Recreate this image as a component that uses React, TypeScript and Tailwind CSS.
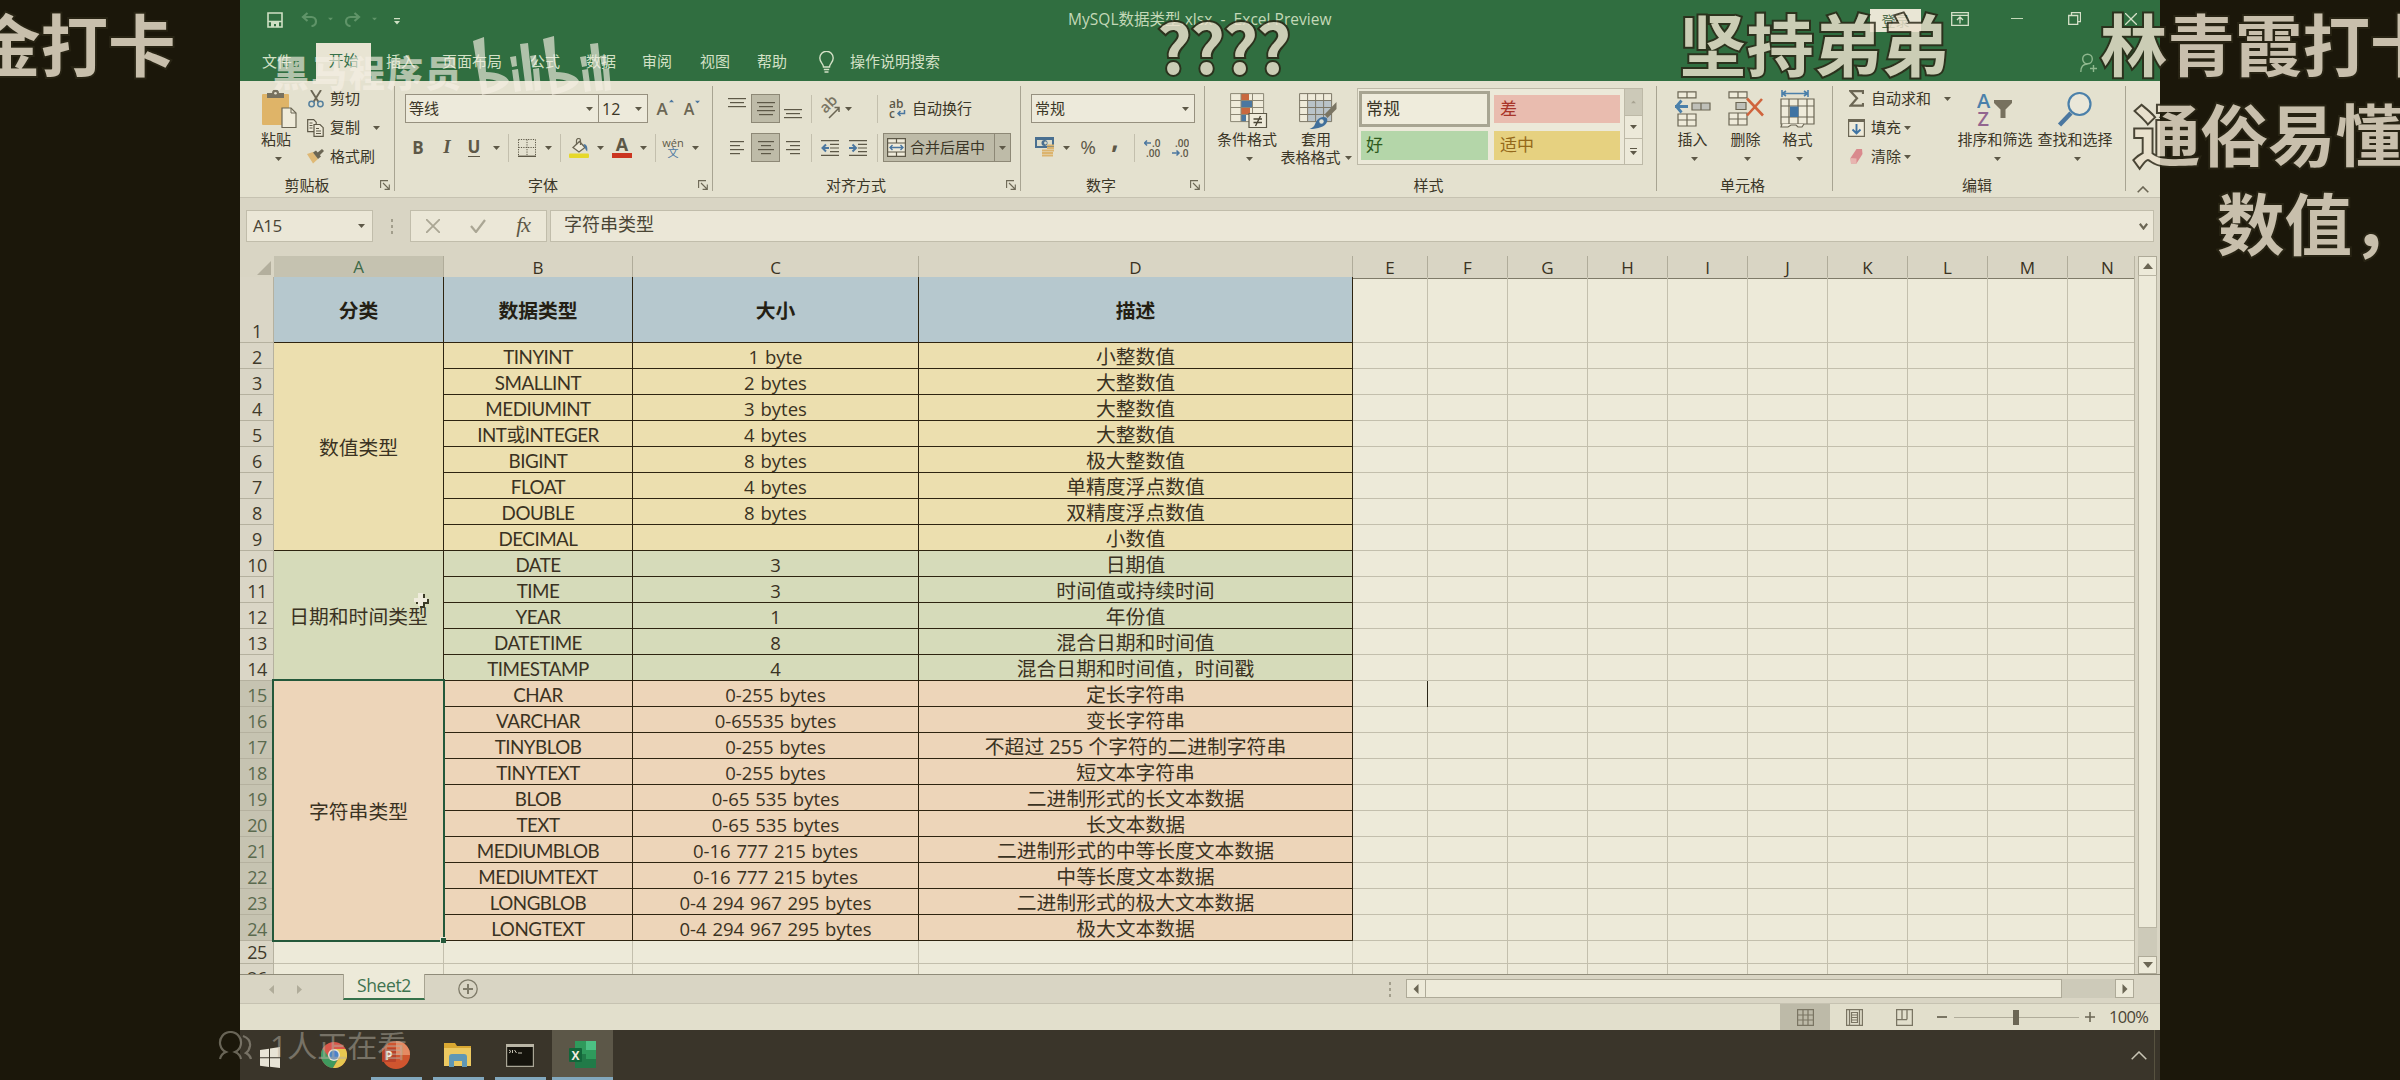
import React from "react";

type Kids = { children?: React.ReactNode; className?: string };

const cx = (...parts: (string | undefined)[]) => parts.filter(Boolean).join(" ");

/* ---------- small building blocks ---------- */

const Caret = ({ className }: { className?: string }) => (
  <svg viewBox="0 0 7 4" className={cx("h-1 w-[7px] shrink-0", className ?? "text-[#5d5847]")}>
    <path d="M0 0h7L3.5 4z" fill="currentColor" />
  </svg>
);

const Slot = ({ children, className }: Kids) => (
  <div className={cx("flex shrink-0 items-center justify-center", className)}>{children}</div>
);

const Sep = ({ className }: { className: string }) => (
  <Slot className={className}>
    <div className="h-7 w-px bg-[#c3bfad]" />
  </Slot>
);

const Launcher = () => (
  <svg viewBox="0 0 10 10" className="h-[10px] w-[10px]" fill="none" stroke="#6c6755" strokeWidth="1.1">
    <path d="M.6 8V.6H8M3 3l6 6M9.3 4.6v4.8H4.6" />
  </svg>
);

const Group = ({
  className,
  label,
  labelClass,
  launcher,
  children,
}: Kids & { label: string; labelClass: string; launcher?: boolean }) => (
  <div className={cx("relative flex h-[116px] shrink-0 flex-col", className)}>
    <div className="h-[91px] w-full">{children}</div>
    <div className="flex h-[25px] items-center justify-between pr-[5px]">
      <span className={cx("text-center text-[15px] leading-5", labelClass)}>{label}</span>
      {launcher && <Launcher />}
    </div>
    <div className="absolute right-0 top-[5px] h-[105px] w-px bg-[#a8a492]" />
  </div>
);

const Lines = ({ widths, align }: { widths: number[]; align: "start" | "middle" | "end" }) => (
  <svg viewBox={`0 0 18 ${widths.length * 4 - 2}`} className="w-[18px]" height={widths.length * 4 - 2}>
    {widths.map((w, i) => (
      <rect
        key={i}
        x={align === "start" ? 0 : align === "end" ? 18 - w : (18 - w) / 2}
        y={i * 4}
        width={w}
        height="1.2"
        fill="#5d5847"
      />
    ))}
  </svg>
);

/* ---------- icons ---------- */

const SaveIcon = () => (
  <svg viewBox="0 0 16 16" className="h-4 w-4" fill="none" stroke="#cfe0c4" strokeWidth="1.6">
    <path d="M1 1h14v14H1zM1 9.5h14" />
    <path d="M4 10h8v5H9v-3H7v3H4z" fill="#cfe0c4" stroke="none" />
  </svg>
);

const UndoIcon = ({ flip }: { flip?: boolean }) => (
  <svg viewBox="0 0 18 15" className={cx("h-[15px] w-[18px]", flip ? "-scale-x-100" : "")} fill="none" stroke="#5f9468" strokeWidth="2.2">
    <path d="M6.5 1L2 5l4.5 4M2 5h8.5a4.5 4.5 0 0 1 0 9" />
  </svg>
);

const PasteIcon = () => (
  <svg viewBox="0 0 35 38" className="h-[38px] w-[35px]">
    <rect x="0" y="4" width="27" height="31" rx="1" fill="#dfb468" />
    <path d="M5 3h5a3.500 3.500 0 0 1 7 0h5v5H5z" fill="#77715f" />
    <circle cx="13.500" cy="3.200" r="1.300" fill="#e5e1d0" />
    <path d="M20 18h9l5 5v14.500H20z" fill="#efebda" stroke="#6b6654" strokeWidth="1.200" />
    <path d="M29 18v5h5" fill="none" stroke="#6b6654" strokeWidth="1" />
  </svg>
);

const CutIcon = () => (
  <svg viewBox="0 0 16 18" className="h-[18px] w-4" fill="none">
    <path d="M3 0l7.500 12M13 0L5.500 12" stroke="#6b6654" strokeWidth="1.900" />
    <circle cx="3.600" cy="14" r="2.700" stroke="#56809d" strokeWidth="1.500" />
    <circle cx="12.400" cy="14" r="2.700" stroke="#56809d" strokeWidth="1.500" />
  </svg>
);

const CopyIcon = () => (
  <svg viewBox="0 0 17 18" className="h-[18px] w-[17px]" fill="#ece8d7" stroke="#5d5847" strokeWidth="1.200">
    <path d="M.7.7h6l2.500 2.500v9.500H.7z" />
    <path d="M7 5.500h6l3.200 3.200v8.600H7z" />
    <path d="M2.500 4h3M2.500 6.500h3M2.500 9h3M9 9.500h3M9 12h5M9 14.500h5" fill="none" />
  </svg>
);

const BrushIcon = () => (
  <svg viewBox="0 0 17 15" className="h-[15px] w-[17px]">
    <path d="M0 5l6-2 5 7-5 4.500z" fill="#dfb976" />
    <path d="M6 3.500l3-2 5 6-3 2.500z" fill="#6b6654" />
    <path d="M10 4l5-4 2 2-4.500 4.500z" fill="#6b6654" />
  </svg>
);

const BorderIcon = () => (
  <svg viewBox="0 0 18 18" className="h-[18px] w-[18px]" fill="none" stroke="#5d5847">
    <path d="M.5.5h17M.5 8.500h17M.5.5v16M9 .5v16M17.500.5v16" strokeDasharray="1.200 1.200" />
    <path d="M0 17.300h18" strokeWidth="1.400" />
  </svg>
);

const BucketIcon = () => (
  <svg viewBox="0 0 20 20" className="h-5 w-5" fill="none">
    <path d="M4 9.500l6.500-6L16 9.500 10 14z" fill="#efebda" stroke="#6b6654" strokeWidth="1.300" />
    <path d="M7.500 7V2.500a2 2 0 0 1 4 0V7" stroke="#6b6654" strokeWidth="1.200" />
    <path d="M14.500 6c3 0 4.500 3 3.700 7.500-1.400-1-2-3-2.500-4.500z" fill="#4b77a0" />
    <rect x="0" y="15.500" width="20" height="4.500" rx="1" fill="#e6d82a" />
  </svg>
);

const OrientIcon = () => (
  <svg viewBox="0 0 20 18" className="h-[18px] w-5 overflow-visible">
    <text x="0" y="0" transform="translate(5.500 14) rotate(-45)" fontSize="15" fontFamily="Open Sans" fontWeight="600" fill="#7a7563">
      ab
    </text>
    <path d="M9 18l10-10M14.500 7.500h4.500V12" stroke="#6b6654" strokeWidth="1.500" fill="none" />
  </svg>
);

const IndentIcon = ({ into }: { into?: boolean }) => (
  <svg viewBox="0 0 18 16" className="h-4 w-[18px]">
    <path d="M0 .7h18M9 4.400h9M9 8h9M9 11.600h9M0 15.300h18" stroke="#5d5847" strokeWidth="1.200" />
    <path d={into ? "M0 8h6M3.500 4.500L7 8l-3.500 3.500" : "M1.500 8H8M5 4.500L1.500 8 5 11.500"} stroke="#4b77a0" strokeWidth="2" fill="none" />
  </svg>
);

const WrapIcon = () => (
  <svg viewBox="0 0 17 20" className="h-5 w-[17px]">
    <text x="0" y="8.500" fontSize="12" fontFamily="Open Sans" fontWeight="600" fill="#5d5847">ab</text>
    <text x="0" y="18.500" fontSize="12" fontFamily="Open Sans" fontWeight="600" fill="#5d5847">c</text>
    <path d="M15.500 11v3.500H9M11.500 12L9 14.500l2.500 2.500" fill="none" stroke="#4b77a0" strokeWidth="1.500" />
  </svg>
);

const MergeIcon = () => (
  <svg viewBox="0 0 19 19" className="h-[19px] w-[19px]" fill="#efebda" stroke="#5d5847" strokeWidth="1.200">
    <path d="M.6.6h17.800v17.800H.6zM.6 5h17.800M.6 14h17.800M9.500.6V5M9.500 14v4.400" />
    <path d="M3 9.500h13M5.500 7L3 9.500 5.500 12M13.500 7L16 9.500 13.500 12" fill="none" stroke="#4b77a0" strokeWidth="1.400" />
  </svg>
);

const CurrencyIcon = () => (
  <svg viewBox="0 0 20 21" className="h-[21px] w-5">
    <path d="M0 0h19v11H0z" fill="#496f90" />
    <path d="M2 3h15v6H2z" fill="#dcdccb" />
    <circle cx="9.500" cy="6" r="3" fill="#496f90" />
    <circle cx="10.500" cy="6" r="1.400" fill="#dcdccb" />
    <path d="M12 8.500h7M12 11h7M12 13.500h7M7 13.500h5M7 16h11M7 18.500h11" stroke="#dcb46e" strokeWidth="1.800" />
  </svg>
);

const DecimalIcon = ({ dec }: { dec?: boolean }) => (
  <svg viewBox="0 0 17 20" className="h-5 w-[17px]">
    <g fontSize="10" fontFamily="Open Sans" fontWeight="600" fill="#5d5847">
      <text x={dec ? 3 : 8} y="8.500">{dec ? ".00" : ".0"}</text>
      <text x={dec ? 8 : 2} y="18.500">{dec ? ".0" : ".00"}</text>
    </g>
    <path
      d={dec ? "M0 15h7M4.500 12.500L7 15l-2.500 2.500" : "M7 5H0.500M3 2.500L.5 5 3 7.500"}
      stroke="#4b77a0"
      strokeWidth="1.500"
      fill="none"
    />
  </svg>
);

const CondIcon = () => (
  <svg viewBox="0 0 38 36" className="h-9 w-[38px]">
    <path d="M.6.6h33v28H.6z" fill="#efebda" />
    <path d="M11 0h8v8h-8z" fill="#c9683f" />
    <path d="M11 8h11v7H11z" fill="#4b77a0" />
    <path d="M11 15h9v7h-9z" fill="#c9683f" />
    <path d="M11 22h5v7h-5z" fill="#4b77a0" />
    <path d="M.6.6h33v28H.6zM.6 7.500h33M.6 14.500h33M.6 21.500h33M11 .6v28M22.500.6v28" stroke="#8c8775" fill="none" />
    <path d="M19 20.500h17.500v14H19z" fill="#efebda" stroke="#5d5847" strokeWidth="1.200" />
    <path d="M23.500 26h8.500M23.500 29.500h8.500M30.500 23l-5 10" stroke="#4a4535" strokeWidth="1.400" />
  </svg>
);

const TableFmtIcon = () => (
  <svg viewBox="0 0 38 36" className="h-9 w-[38px]">
    <path d="M.6.6h32v28H.6z" fill="#efebda" />
    <path d="M9 7.500h24v21H9z" fill="#b9c3c8" />
    <path d="M.6.6h32v28H.6zM.6 7.500h32M.6 14.500h32M.6 21.500h32M8.600.6v28M16.600.6v28M24.600.6v28" stroke="#7d7867" fill="none" />
    <path d="M37.500 9v7l-9 9-3-3.500z" fill="#7a7563" />
    <path d="M24 24c4-.5 5.500 2.500 3.500 6s-8 6-17 6c5-2 5-4 6.500-7s4-4.700 7-5z" fill="#41709b" />
    <circle cx="22.500" cy="28.500" r="2.200" fill="#dfe1d6" />
  </svg>
);

const InsertIcon = () => (
  <svg viewBox="0 0 36 36" className="h-9 w-9" fill="#efebda" stroke="#6b6654" strokeWidth="1.200">
    <path d="M3 .8h18v6H3zM12 .8v6M3 23h18v12H3zM12 23v12M3 29h18" />
    <path d="M17 12h18v7H17zM26 12v7" fill="#bfc0b9" />
    <path d="M0 15.500h13M6.500 9.500L1.500 15.500l5 6" fill="none" stroke="#4b80aa" strokeWidth="2.800" />
  </svg>
);

const DeleteIcon = () => (
  <svg viewBox="0 0 36 36" className="h-9 w-9" fill="#efebda" stroke="#6b6654" strokeWidth="1.200">
    <path d="M1 .8h18v6H1zM10 .8v6M1 22h18v12H1zM10 22v12M1 28h18" />
    <path d="M8 11.500h10v7H8z" fill="#bfc0b9" />
    <path d="M19 7.500l16 17M34 8L19 24.500" fill="none" stroke="#d0643d" strokeWidth="2.600" />
  </svg>
);

const FormatIcon = () => (
  <svg viewBox="0 0 36 38" className="h-[38px] w-9" fill="#efebda" stroke="#6b6654" strokeWidth="1.200">
    <path d="M1 9h33v25H1zM1 16h33M1 27h33M9 9v25M18 9v25M27 9v25" />
    <path d="M10 16.500h8.500V27H10z" fill="#3f73a3" stroke="none" />
    <path d="M2 34l-1 3h7l3-2h5l2 2h4l2-3" />
    <path d="M2 3.500h26M2 0v7M28 0v7M6 1L2.500 3.500 6 6M24 1l3.500 2.500L24 6" fill="none" stroke="#4b80aa" strokeWidth="1.600" />
  </svg>
);

const SigmaIcon = () => (
  <svg viewBox="0 0 15 17" className="h-[17px] w-[15px]" fill="none" stroke="#6b6654" strokeWidth="2.200">
    <path d="M14 4V1.200H1.500L8 8.200l-6.500 7.500H14V13" />
  </svg>
);

const FillIcon = () => (
  <svg viewBox="0 0 17 18" className="h-[18px] w-[17px]">
    <path d="M.6.6h15.800v16.800H.6z" fill="#efebda" stroke="#6b6654" strokeWidth="1.200" />
    <path d="M0 0h17v3H0z" fill="#6b6654" />
    <path d="M8.500 5v9.500M4.500 10.500l4 4 4-4" stroke="#3f73a3" strokeWidth="1.900" fill="none" />
  </svg>
);

const EraserIcon = () => (
  <svg viewBox="0 0 13 15" className="h-[15px] w-[13px]">
    <path d="M6.500 0h5.500l.5 5L6.500 14.500H1L.5 9z" fill="#d98a8d" />
    <path d="M.5 9l6 .5v5H1z" fill="#e7b5b0" />
  </svg>
);

const SortIcon = () => (
  <svg viewBox="0 0 36 34" className="h-[34px] w-9">
    <g fontFamily="Open Sans" fontSize="20" fontWeight="600">
      <text x="0" y="14.500" fill="#4b80aa">A</text>
      <text x="0.500" y="33" fill="#92658f">Z</text>
    </g>
    <path d="M17 7h18v3l-6.500 6.500V25h-5v-8.500L17 10z" fill="#77715f" />
  </svg>
);

const FindIcon = () => (
  <svg viewBox="0 0 36 36" className="h-9 w-9">
    <circle cx="22.500" cy="13" r="11" fill="#eae7d9" stroke="#4b80aa" strokeWidth="2.200" />
    <path d="M14 22L2.500 34" stroke="#4b77a0" strokeWidth="4.500" />
  </svg>
);

/* ---------- title bar and tabs ---------- */

const TitleBar = () => (
  <div className="flex h-[43px] items-center pl-[17px] pb-[6px] text-[#c4d9b8]">
    <Slot className="w-9 pt-[2px]"><SaveIcon /></Slot>
    <Slot className="w-[33px] pt-[2px]"><UndoIcon /></Slot>
    <Slot className="w-2"><Caret className="scale-75 text-[#5f9468]" /></Slot>
    <Slot className="w-9 pt-[2px]"><UndoIcon flip /></Slot>
    <Slot className="w-2"><Caret className="scale-75 text-[#5f9468]" /></Slot>
    <Slot className="w-[38px]">
      <svg viewBox="0 0 6 7" className="mt-[6px] h-[7px] w-[6px]"><path d="M0 0h6v1.200H0zM0 3h6L3 6.500z" fill="#cfe0c4" /></svg>
    </Slot>
    <div className="ml-[652px] w-[802px] whitespace-pre text-[15.500px] leading-6 tracking-[0.030px]">MySQL数据类型.xlsx  -  Excel Preview</div>
    <Slot className="mt-1 h-[23px] w-[51px] bg-[#e9e6d5] text-sm text-[#4b6b48]">登录</Slot>
    <Slot className="w-[77px]">
      <svg viewBox="0 0 18 14" className="h-[14px] w-[18px]" fill="none" stroke="#d5e0c8" strokeWidth="1.300">
        <path d="M.7.7h16.600v12.600H.7zM.7 3.300h16.600M9 11.500V5.500M6 8l3-3 3 3" />
      </svg>
    </Slot>
    <Slot className="w-[38px]"><div className="h-px w-3 bg-[#c4d9b8]" /></Slot>
    <Slot className="w-[76px]">
      <svg viewBox="0 0 13 13" className="h-[13px] w-[13px]" fill="none" stroke="#d5e0c8" strokeWidth="1.300">
        <path d="M.7 3.500h9v9h-9zM3.500 3.500V.7h9v9H9.700" />
      </svg>
    </Slot>
    <Slot className="w-[38px]">
      <svg viewBox="0 0 12 12" className="h-3 w-3" stroke="#d5e0c8" strokeWidth="1.300"><path d="M0 0l12 12M12 0L0 12" /></svg>
    </Slot>
  </div>
);

const Tabs = () => (
  <div className="flex h-[38px] items-center pb-[2px] text-[15px] text-[#d3e1c6]">
    <Slot className="w-[74px]">文件</Slot>
    <Slot className="-mb-[2px] ml-[2px] h-[38px] w-[55px] bg-[#e8e4d3] pb-[3px] text-[#35714a]">开始</Slot>
    <Slot className="w-[60px]">插入</Slot>
    <Slot className="w-[82px]">页面布局</Slot>
    <Slot className="w-[64px]">公式</Slot>
    <Slot className="w-12">数据</Slot>
    <Slot className="w-16">审阅</Slot>
    <Slot className="w-[52px]">视图</Slot>
    <Slot className="w-[62px]">帮助</Slot>
    <Slot className="w-[47px] pt-[2px]">
      <svg viewBox="0 0 15 22" className="h-[22px] w-[15px]" fill="none" stroke="#d3e1c6" strokeWidth="1.400">
        <path d="M4.500 16c0-3-3.700-4.500-3.700-9a6.700 6.700 0 0 1 13.400 0c0 4.500-3.700 6-3.700 9zM4.800 18.500h5.400M5.500 21h4" />
      </svg>
    </Slot>
    <div className="w-[1230px]">操作说明搜索</div>
    <svg viewBox="0 0 20 20" className="mt-1 h-5 w-5" fill="none" stroke="#8fb88e" strokeWidth="1.400">
      <circle cx="7.500" cy="6" r="4.800" />
      <path d="M.8 19c0-5 2.500-8 6.700-8M10 15.500h7M13.500 12v7" />
    </svg>
  </div>
);

/* ---------- ribbon ---------- */

const Combo = ({ className, text, children }: Kids & { text?: string }) => (
  <div className={cx("flex h-[29px] items-center justify-between border border-[#96907f] bg-[#edeadb] pl-[3px] pr-[5px] text-[15px]", className)}>
    <span>{text ?? children}</span>
    <Caret />
  </div>
);

const BigButton = ({ icon, label, className, iconClass }: { icon: React.ReactNode; label: string; className: string; iconClass?: string }) => (
  <div className={cx("flex shrink-0 flex-col items-center", className)}>
    <div className={cx("flex h-[41px] items-start", iconClass)}>{icon}</div>
    <div className="-mt-[2px] whitespace-nowrap text-[15px] leading-5">{label}</div>
    <Caret className="ml-1 mt-2 text-[#5d5847]" />
  </div>
);

const ClipboardGroup = () => (
  <Group className="w-[155px]" label="剪贴板" labelClass="w-[134px]" launcher>
    <div className="flex pt-[9px]">
      <BigButton className="w-[67px] pl-[5px]" iconClass="pl-[6px]" icon={<PasteIcon />} label="粘贴" />
      <div className="-mt-[6px] flex flex-col text-[15px] leading-[29px]">
        <div className="flex items-center"><Slot className="mr-[6px] w-[17px]"><CutIcon /></Slot><span>剪切</span></div>
        <div className="flex items-center"><Slot className="mr-[6px] w-[17px]"><CopyIcon /></Slot><span className="w-[43px]">复制</span><Caret /></div>
        <div className="flex items-center"><Slot className="mr-[6px] w-[17px]"><BrushIcon /></Slot><span>格式刷</span></div>
      </div>
    </div>
  </Group>
);

const FontGroup = () => (
  <Group className="w-[318px]" label="字体" labelClass="w-[296px]" launcher>
    <div className="flex items-center pl-[10px] pt-[13px]">
      <Combo className="w-[194px]" text="等线" />
      <Combo className="-ml-px w-[50px] text-[16px]" text="12" />
      <Slot className="relative w-7 text-[17px] font-semibold text-[#6b6654]">A<Caret className="absolute right-[1px] top-[3px] rotate-180 scale-75 text-[#4b77a0]" /></Slot>
      <Slot className="relative w-[26px] text-[16px] font-semibold text-[#6b6654]">A<Caret className="absolute right-[1px] top-[3px] scale-75 text-[#4b77a0]" /></Slot>
    </div>
    <div className="mt-[10px] flex h-[29px] items-center pl-[10px] text-[17px] text-[#5d5847]">
      <Slot className="w-[26px] font-bold">B</Slot>
      <Slot className="w-8 font-['Liberation_Serif'] text-[19px] font-bold italic">I</Slot>
      <Slot className="w-[22px] font-bold"><span className="border-b border-[#5d5847] leading-[18px]">U</span></Slot>
      <Slot className="w-[22px]"><Caret /></Slot>
      <Sep className="w-[3px]" />
      <Slot className="w-[34px]"><BorderIcon /></Slot>
      <Slot className="w-2"><Caret /></Slot>
      <Sep className="w-[17px]" />
      <Slot className="w-5"><BucketIcon /></Slot>
      <Slot className="w-[22px]"><Caret /></Slot>
      <Slot className="w-[22px] flex-col">
        <span className="text-[18px] font-bold leading-[15px]">A</span>
        <div className="mt-px h-[5px] w-5 bg-[#cb3520]" />
      </Slot>
      <Slot className="w-5"><Caret /></Slot>
      <Sep className="w-[5px]" />
      <Slot className="w-[30px] flex-col">
        <span className="text-[11px] leading-[9px]">wén</span>
        <span className="text-[11px] leading-[11px] text-[#4b77a0]">文</span>
      </Slot>
      <Slot className="w-[14px]"><Caret /></Slot>
    </div>
  </Group>
);

const Pressed = ({ children }: Kids) => (
  <Slot className="ml-px h-[29px] w-[29px] border border-[#8d8876] bg-[#bebba8]">{children}</Slot>
);

const AlignGroup = () => (
  <Group className="w-[308px]" label="对齐方式" labelClass="w-[286px]" launcher>
    <div className="mt-[13px] flex h-[29px] items-center pl-[11px]">
      <Slot className="w-[26px] pb-3"><Lines widths={[18, 14, 18]} align="middle" /></Slot>
      <Pressed><Lines widths={[18, 14, 18, 14]} align="middle" /></Pressed>
      <Slot className="w-[26px] pt-[10px]"><Lines widths={[18, 14, 18]} align="middle" /></Slot>
      <Sep className="w-[11px]" />
      <Slot className="w-[25px]"><OrientIcon /></Slot>
      <Slot className="w-3"><Caret /></Slot>
      <Sep className="ml-[17px] w-3" />
      <div className="ml-[6px]"><WrapIcon /></div>
      <span className="ml-[6px] text-[15px]">自动换行</span>
    </div>
    <div className="mt-[10px] flex h-[29px] items-center pl-[11px]">
      <Slot className="w-[26px] pl-1"><Lines widths={[14, 10, 14, 10]} align="start" /></Slot>
      <Pressed><Lines widths={[16, 10, 16, 10]} align="middle" /></Pressed>
      <Slot className="w-[26px] pr-1"><Lines widths={[14, 10, 14, 10]} align="end" /></Slot>
      <Sep className="w-[11px]" />
      <Slot className="w-[26px]"><IndentIcon /></Slot>
      <Slot className="w-[30px]"><IndentIcon into /></Slot>
      <Sep className="w-2" />
      <div className="ml-[2px] flex h-[29px] w-[128px] border border-[#8d8876] bg-[#bebba8]">
        <div className="flex flex-1 items-center pl-[3px]"><MergeIcon /><span className="ml-1 whitespace-nowrap text-[15px]">合并后居中</span></div>
        <Slot className="w-4 border-l border-[#8d8876]"><Caret /></Slot>
      </div>
    </div>
  </Group>
);

const NumberGroup = () => (
  <Group className="w-[184px]" label="数字" labelClass="w-[160px]" launcher>
    <div className="pl-[10px] pt-[13px]"><Combo className="w-[164px]" text="常规" /></div>
    <div className="mt-[10px] flex h-[29px] items-center pl-[14px] text-[#5d5847]">
      <CurrencyIcon />
      <Slot className="w-[22px]"><Caret /></Slot>
      <Slot className="w-[22px] text-[19px]">%</Slot>
      <Slot className="w-8 pb-4 text-[26px] font-bold">,</Slot>
      <Sep className="w-[6px]" />
      <Slot className="w-[30px]"><DecimalIcon /></Slot>
      <Slot className="w-[26px]"><DecimalIcon dec /></Slot>
    </div>
  </Group>
);

const StylesGroup = () => (
  <Group className="w-[452px]" label="样式" labelClass="w-[450px]">
    <div className="flex">
      <BigButton className="w-[84px] pt-[12px]" iconClass="!h-[38px] pl-1" icon={<CondIcon />} label="条件格式" />
      <div className="flex w-[54px] flex-col items-center pt-[12px] text-[15px]">
        <div className="h-[38px] pl-1"><TableFmtIcon /></div>
        <div className="-mt-[2px] w-[56px] shrink-0 text-center leading-5">套用</div>
        <div className="flex items-center gap-1 whitespace-nowrap leading-[17px]"><span>表格格式</span><Caret /></div>
      </div>
      <div className="ml-[14px] mt-[7px] flex h-[77px] w-[286px] border border-[#bdb9a7] bg-[#ece9d9] text-[17px]">
        <div className="grid flex-1 grid-cols-[131px_126px] grid-rows-[36px_29px] gap-x-1 gap-y-1 pl-px pt-[2px]">
          <div className="flex items-center border-[3px] border-[#a8a592] bg-[#efecdc] pl-[4px]">常规</div>
          <div className="my-1 flex items-center bg-[#e9bcaf] pl-[6px] text-[#a8352a]">差</div>
          <div className="mx-[2px] flex items-center bg-[#b4d6a9] pb-px pl-[5px] text-[#2d5b1d]">好</div>
          <div className="flex items-center bg-[#e6d180] pb-px pl-[6px] text-[#94681a]">适中</div>
        </div>
        <div className="flex w-[18px] flex-col border-l border-[#bdb9a7]">
          <Slot className="h-[26px] bg-[#ccc9b8]"><Caret className="rotate-180 scale-75 text-[#a8a492]" /></Slot>
          <Slot className="h-6 border-y border-[#bdb9a7]"><Caret /></Slot>
          <Slot className="flex-1 flex-col gap-[2px]"><div className="h-px w-[7px] bg-[#5d5847]" /><Caret /></Slot>
        </div>
      </div>
    </div>
  </Group>
);

const CellsGroup = () => (
  <Group className="w-[176px]" label="单元格" labelClass="w-[171px]">
    <div className="flex pl-[9px] pt-[10px]">
      <BigButton className="w-[53px]" iconClass="!h-10" icon={<InsertIcon />} label="插入" />
      <BigButton className="w-[53px]" iconClass="!h-10" icon={<DeleteIcon />} label="删除" />
      <BigButton className="w-[51px]" iconClass="!h-10 -mt-px mb-px" icon={<FormatIcon />} label="格式" />
    </div>
  </Group>
);

const EditingGroup = () => (
  <Group className="w-[293px]" label="编辑" labelClass="w-[290px]">
    <div className="flex">
      <div className="w-[123px] pl-[15px] pt-[3px] text-[15px] leading-[29px]">
        <div className="flex items-center"><Slot className="mr-[6px] w-[17px]"><SigmaIcon /></Slot><span className="w-[73px]">自动求和</span><Caret /></div>
        <div className="flex items-center"><Slot className="mr-[6px] w-[17px]"><FillIcon /></Slot><span className="w-[33px]">填充</span><Caret /></div>
        <div className="flex items-center"><Slot className="mr-[6px] w-[17px]"><EraserIcon /></Slot><span className="w-[33px]">清除</span><Caret /></div>
      </div>
      <BigButton className="w-[78px] pt-[10px]" iconClass="!h-10 pt-[2px]" icon={<SortIcon />} label="排序和筛选" />
      <BigButton className="w-[82px] pt-[10px]" iconClass="!h-10" icon={<FindIcon />} label="查找和选择" />
    </div>
  </Group>
);

const Ribbon = () => (
  <div className="flex h-[117px] shrink-0 border-b border-[#c6c2b1] bg-[#e4e1cf] text-[#3b3627]">
    <ClipboardGroup />
    <FontGroup />
    <AlignGroup />
    <NumberGroup />
    <StylesGroup />
    <CellsGroup />
    <EditingGroup />
    <div className="flex flex-1 items-end justify-center pb-1">
      <svg viewBox="0 0 12 7" className="h-[7px] w-3" fill="none" stroke="#6b6654" strokeWidth="1.600"><path d="M.7 6.300L6 1l5.300 5.300" /></svg>
    </div>
  </div>
);

/* ---------- formula bar ---------- */

const FormulaBar = () => (
  <div className="flex h-[58px] shrink-0 bg-[#d9d5c4] pl-[6px] pt-[12px] text-[#4a4535]">
    <div className="flex h-8 w-[127px] items-center justify-between border border-[#c1bdab] bg-[#ebe7d7] pl-[6px] pr-[7px] text-[17px] tracking-tight">
      A15<Caret />
    </div>
    <Slot className="h-8 w-[37px] flex-col gap-[3px]">
      <div className="h-[3px] w-[2px] bg-[#a29e8c]" /><div className="h-[3px] w-[2px] bg-[#a29e8c]" /><div className="h-[3px] w-[2px] bg-[#a29e8c]" />
    </Slot>
    <div className="flex h-8 w-[137px] items-center border border-[#c1bdab] bg-[#ebe7d7]">
      <Slot className="w-11">
        <svg viewBox="0 0 14 14" className="h-[14px] w-[14px]" stroke="#aaa694" strokeWidth="1.800"><path d="M0 0l14 14M14 0L0 14" /></svg>
      </Slot>
      <Slot className="w-[46px]">
        <svg viewBox="0 0 16 14" className="h-[14px] w-4" fill="none" stroke="#aaa694" strokeWidth="2.200"><path d="M1 7l5 6L15 1" /></svg>
      </Slot>
      <Slot className="w-11 pb-1 font-['Liberation_Serif'] text-[22px] italic tracking-tighter text-[#5d5847]">fx</Slot>
    </div>
    <div className="ml-[3px] flex h-8 w-[1604px] items-center justify-between border border-[#c1bdab] bg-[#ebe7d7] pl-[13px] pr-[5px] text-[18px]">
      <span className="pb-[3px]">字符串类型</span>
      <svg viewBox="0 0 9 7" className="h-[7px] w-[9px]" fill="none" stroke="#6b6654" strokeWidth="2.200"><path d="M.8.8l3.700 4.700L8.200.8" /></svg>
    </div>
  </div>
);

/* ---------- sheet ---------- */

const letters = ["A", "B", "C", "D", "E", "F", "G", "H", "I", "J", "K", "L", "M", "N"];
const spare = ["E", "F", "G", "H", "I", "J", "K", "L", "M", "N"];

const rows: [string, string, string][] = [
  ["TINYINT", "1 byte", "小整数值"],
  ["SMALLINT", "2 bytes", "大整数值"],
  ["MEDIUMINT", "3 bytes", "大整数值"],
  ["INT或INTEGER", "4 bytes", "大整数值"],
  ["BIGINT", "8 bytes", "极大整数值"],
  ["FLOAT", "4 bytes", "单精度浮点数值"],
  ["DOUBLE", "8 bytes", "双精度浮点数值"],
  ["DECIMAL", "", "小数值"],
  ["DATE", "3", "日期值"],
  ["TIME", "3", "时间值或持续时间"],
  ["YEAR", "1", "年份值"],
  ["DATETIME", "8", "混合日期和时间值"],
  ["TIMESTAMP", "4", "混合日期和时间值，时间戳"],
  ["CHAR", "0-255 bytes", "定长字符串"],
  ["VARCHAR", "0-65535 bytes", "变长字符串"],
  ["TINYBLOB", "0-255 bytes", "不超过 255 个字符的二进制字符串"],
  ["TINYTEXT", "0-255 bytes", "短文本字符串"],
  ["BLOB", "0-65 535 bytes", "二进制形式的长文本数据"],
  ["TEXT", "0-65 535 bytes", "长文本数据"],
  ["MEDIUMBLOB", "0-16 777 215 bytes", "二进制形式的中等长度文本数据"],
  ["MEDIUMTEXT", "0-16 777 215 bytes", "中等长度文本数据"],
  ["LONGBLOB", "0-4 294 967 295 bytes", "二进制形式的极大文本数据"],
  ["LONGTEXT", "0-4 294 967 295 bytes", "极大文本数据"],
];

const tone = (i: number) => (i < 8 ? "bg-[#ecdfaf]" : i < 13 ? "bg-[#d6dbba]" : "bg-[#edd5b9]");

const COLS = "grid-cols-[34px_170px_189px_286px_434px_75px_80px_80px_80px_80px_80px_80px_80px_80px_80px]";

const RowHead = ({ n, selected }: { n: number; selected?: boolean }) => (
  <div
    className={cx(
      "flex items-end justify-center overflow-hidden border-b border-r border-[#b5b19f] pl-px text-[18px] leading-[21px] tracking-[-0.500px]",
      selected ? "bg-[#c6c3b1] text-[#5a6a4e]" : "bg-[#dad6c6] text-[#3f3a2b]",
    )}
  >
    {n}
  </div>
);

const Cell = ({ children, className }: Kids) => (
  <div className={cx("flex items-center justify-center whitespace-nowrap border-b border-r border-[#2e2410] pt-[2px] leading-[23px]", className)}>
    {children}
  </div>
);

const SpareCells = () => (
  <>
    {spare.map((c) => (
      <div key={c} className="border-b border-r border-[#c3bfad]" />
    ))}
  </>
);

const MoveCursor = () => (
  <svg viewBox="0 0 18 18" className="absolute left-[139px] top-[41px] h-[18px] w-[18px]">
    <path d="M7 2h5v5h4v5h-4v4H7v-4H3V7h4z" fill="#3b3a26" />
    <path d="M5 1h5v5h4v4h-4v4H5v-4H1V6h4z" fill="#efecdc" />
  </svg>
);

const Sheet = () => (
  <div className="h-[718px] w-[1895px] overflow-hidden border-r border-[#b9b5a3] bg-[#edead9] text-[#3a3222]">
    <div className={cx("grid h-[21px] text-[17px]", COLS)}>
      <div className="flex items-end justify-end border-b border-[#8f8b79] bg-[#d9d5c4] pb-[3px] pr-[3px]">
        <svg viewBox="0 0 14 14" className="h-[14px] w-[14px]"><path d="M14 0v14H0z" fill="#b3af9d" /></svg>
      </div>
      {letters.map((l) => (
        <div
          key={l}
          className={cx(
            "flex items-center justify-center border-r pt-px leading-5",
            l === "A" ? "border-b-2 border-b-[#24583a] border-r-[#b0ac9a] bg-[#c5c2b0] text-[#3d6a48]" : "border-b border-b-[#7f7b69] border-r-[#b0ac9a] bg-[#d9d5c4]",
          )}
        >
          {l}
        </div>
      ))}
    </div>
    <div className={cx("grid grid-rows-[66px_repeat(23,26px)_23px_26px] text-[19.800px]", COLS)}>
      <RowHead n={1} />
      {["分类", "数据类型", "大小", "描述"].map((t) => (
        <Cell key={t} className="bg-[#b6c8ce] font-bold text-[#241f14]">{t}</Cell>
      ))}
      <SpareCells />
      {rows.map(([type, size, desc], i) => (
        <React.Fragment key={i}>
          <RowHead n={i + 2} selected={i > 12} />
          {i === 0 && <Cell className="row-span-8 bg-[#ecdfaf]">数值类型</Cell>}
          {i === 8 && (
            <Cell className="relative row-span-5 bg-[#d6dbba]">
              日期和时间类型
              <MoveCursor />
            </Cell>
          )}
          {i === 13 && (
            <Cell className="relative row-span-10 bg-[#edd5b9]">
              字符串类型
              <div className="absolute -inset-x-[2px] -bottom-[2px] -top-[2px] border-2 border-[#24583a]" />
              <div className="absolute -bottom-[3px] -right-[3px] h-[6px] w-[6px] border-l border-t border-[#edead9] bg-[#24583a]" />
            </Cell>
          )}
          <Cell className={cx("font-['Lato','Noto_Sans_CJK_SC',sans-serif] text-[18.800px] tracking-[-0.500px]", tone(i))}>{type}</Cell>
          <Cell className={tone(i)}><span className="font-['Open_Sans'] text-[18.500px] [word-spacing:1px]">{size}</span></Cell>
          <Cell className={tone(i)}>{desc}</Cell>
          <SpareCells />
        </React.Fragment>
      ))}
      {[25, 26].map((n) => (
        <React.Fragment key={n}>
          <RowHead n={n} />
          {["a", "b", "c", "d"].map((k) => (
            <div key={k} className="border-b border-r border-[#c3bfad]" />
          ))}
          <SpareCells />
        </React.Fragment>
      ))}
    </div>
  </div>
);

const ScrollArrow = ({ className, d }: { className: string; d: string }) => (
  <Slot className={cx("border border-[#aeaa98] bg-[#edead9]", className)}>
    <svg viewBox="0 0 10 10" className="h-[10px] w-[10px]"><path d={d} fill="#6b6654" /></svg>
  </Slot>
);

const VerticalScroll = () => (
  <div className="flex flex-1 flex-col bg-[#d9d5c4] pl-[3px] pr-[3px]">
    <ScrollArrow className="h-[20px]" d="M0 8h10L5 2z" />
    <div className="-mt-px h-[653px] border border-[#b9b5a3] bg-[#edead9]" />
    <div className="flex-1 bg-[#cdcab9]" />
    <ScrollArrow className="h-[18px]" d="M0 2h10L5 8z" />
  </div>
);

const SheetTabs = () => (
  <div className="flex h-[30px] shrink-0 border-b border-t border-b-[#c6c2b1] border-t-[#8f8b79] bg-[#d9d5c4]">
    <Slot className="ml-5 w-[22px]"><svg viewBox="0 0 5 9" className="h-[9px] w-[5px]"><path d="M5 0v9L0 4.500z" fill="#b0ac9a" /></svg></Slot>
    <Slot className="ml-[6px] w-[22px]"><svg viewBox="0 0 5 9" className="h-[9px] w-[5px]"><path d="M0 0v9l5-4.500z" fill="#b0ac9a" /></svg></Slot>
    <Slot className="-mt-px ml-[33px] h-[26px] w-[82px] border-x border-b-2 border-x-[#a8a492] border-b-[#35714a] bg-[#edead9] pb-[2px] font-['Open_Sans'] text-[17.500px] font-medium tracking-[-0.400px] text-[#3f7350]">Sheet2</Slot>
    <Slot className="ml-[33px] w-5">
      <svg viewBox="0 0 20 20" className="h-5 w-5" fill="none" stroke="#7f7b69"><circle cx="10" cy="10" r="9.200" strokeWidth="1.300" /><path d="M10 5v10M5 10h10" strokeWidth="2" /></svg>
    </Slot>
    <Slot className="ml-[910px] w-[4px] flex-col gap-[3px]">
      <div className="h-[3px] w-[2px] bg-[#a29e8c]" /><div className="h-[3px] w-[2px] bg-[#a29e8c]" /><div className="h-[3px] w-[2px] bg-[#a29e8c]" />
    </Slot>
    <div className="ml-[14px] mt-1 flex h-[19px] w-[728px] bg-[#cdcab9]">
      <ScrollArrow className="w-5" d="M7.500 0v10L2.500 5z" />
      <div className="-ml-px w-[637px] border border-[#aeaa98] bg-[#edead9]" />
      <div className="flex-1" />
      <ScrollArrow className="w-[19px]" d="M2.500 0v10l5-5z" />
    </div>
  </div>
);

const StatusBar = () => (
  <div className="flex h-[26px] shrink-0 items-center bg-[#e2dfcc] pl-[1540px] text-[#6b6654]">
    <Slot className="h-full w-[50px] bg-[#bdbaa8]">
      <svg viewBox="0 0 17 17" className="h-[17px] w-[17px]" fill="none" stroke="#7a7563" strokeWidth="1.200"><path d="M.6.6h15.800v15.800H.6zM.6 6h15.800M.6 11h15.800M6 .6v15.800M11 .6v15.800" /></svg>
    </Slot>
    <Slot className="w-[49px]">
      <svg viewBox="0 0 17 17" className="h-[17px] w-[17px]" fill="none" stroke="#7a7563" strokeWidth="1.200"><path d="M.6.6h15.800v15.800H.6zM3.500.6v15.800M13.500.6v15.800M5.500 3.500h6v10h-6z" /><path d="M6 6h5M6 8.500h5M6 11h5" /></svg>
    </Slot>
    <Slot className="w-[51px]">
      <svg viewBox="0 0 17 17" className="h-[17px] w-[17px]" fill="none" stroke="#7a7563" strokeWidth="1.300"><path d="M.6.6h15.800v15.800H.6zM6 .6v10M11 .6v10M.6 10.600H11" /></svg>
    </Slot>
    <Slot className="w-6"><div className="h-[2px] w-[10px] bg-[#7a7563]" /></Slot>
    <div className="flex h-4 w-[125px] items-center">
      <div className="h-px w-[59px] bg-[#b0ac9a]" /><div className="h-[15px] w-[6px] bg-[#6b6654]" /><div className="h-px flex-1 bg-[#b0ac9a]" />
    </div>
    <Slot className="w-[22px]"><svg viewBox="0 0 10 10" className="h-[10px] w-[10px]" stroke="#6b6654" strokeWidth="1.600"><path d="M5 0v10M0 5h10" /></svg></Slot>
    <span className="ml-[8px] font-['Open_Sans'] text-[16.500px] tracking-[-0.700px] text-[#4a4535]">100%</span>
  </div>
);

/* ---------- taskbar ---------- */

const Task = ({ children, className, running }: Kids & { running?: boolean }) => (
  <div className={cx("relative flex h-full shrink-0 items-center justify-center", className)}>
    {children}
    {running && <div className="absolute inset-x-0 bottom-0 h-[3px] bg-[#82a8bd]" />}
  </div>
);

const Taskbar = () => (
  <div className="flex h-[50px] shrink-0 bg-[#3a352a]">
    <Task className="ml-[14px] w-[32px]">
      <svg viewBox="0 0 20 21" className="mt-1 h-[21px] w-5" fill="#e8e4d6"><path d="M0 3l9-1.300v8.500H0zM10 1.500L20 0v10.200H10zM0 11.200h9V20l-9-1.300zM10 11.200h10V21l-10-1.200z" /></svg>
    </Task>
    <Task className="ml-[22px] w-[51px]">
      <svg viewBox="0 0 26 26" className="h-[26px] w-[26px]">
        <circle cx="13" cy="13" r="13" fill="#d9574a" />
        <path d="M1.700 6.500A13 13 0 0 0 12 26l6-10.500H8z" fill="#3f9a5e" />
        <path d="M24.500 7A13 13 0 0 1 12 26l6-10L14 7z" fill="#e6c750" />
        <circle cx="13" cy="13" r="6" fill="#e8e4d6" />
        <circle cx="13" cy="13" r="4.600" fill="#4a83c9" />
      </svg>
    </Task>
    <Task className="ml-[12px] w-[51px] pr-1" running>
      <svg viewBox="0 0 30 28" className="h-7 w-[30px]">
        <circle cx="16" cy="14" r="14" fill="#d0552f" />
        <path d="M16 0a14 14 0 0 1 14 14H16z" fill="#e58a63" />
        <rect x="2" y="7" width="14" height="14" rx="1" fill="#b8432a" />
        <text x="5" y="18.500" fontSize="12" fontWeight="700" fontFamily="Open Sans" fill="#f2ece0">P</text>
      </svg>
    </Task>
    <Task className="ml-[11px] w-[51px] pr-[2px]" running>
      <svg viewBox="0 0 28 24" className="h-6 w-7">
        <path d="M0 0h11l2 3h14v20H0z" fill="#d9a832" />
        <path d="M0 5h27v18H0z" fill="#ecc961" />
        <path d="M5 24V14q0-3 3-3h12q3 0 3 3v10h-5v-6h-8v6z" fill="#5f97b5" />
      </svg>
    </Task>
    <Task className="ml-[11px] w-[51px] pr-[2px]" running>
      <svg viewBox="0 0 28 23" className="h-[23px] w-7">
        <path d="M.6.6h26.800v21.800H.6z" fill="#15130c" stroke="#a9a595" strokeWidth="1.200" />
        <path d="M0 0h28v3H0z" fill="#b9b5a5" />
        <path d="M3 6l2 1.500L3 9M6.500 6v3M8.500 6l2 3M12 9h4" stroke="#c9c5b5" fill="none" strokeWidth="1" />
      </svg>
    </Task>
    <Task className="ml-[6px] w-[61px] bg-[#5c5748]" running>
      <svg viewBox="0 0 28 28" className="h-7 w-7">
        <path d="M6 0h21v27H6z" fill="#217a48" />
        <path d="M6 0h11v13H6z" fill="#2f9a5c" />
        <path d="M17 0h10v9H17z" fill="#4cc084" />
        <path d="M17 9h10v9H17z" fill="#2f9a5c" />
        <rect x="0" y="7" width="13" height="14" rx="1" fill="#12663a" />
        <text x="2.500" y="18.500" fontSize="12" fontWeight="700" fontFamily="Open Sans" fill="#f2ece0">X</text>
      </svg>
    </Task>
    <div className="flex flex-1 items-center justify-end pr-[5px]">
      <svg viewBox="0 0 16 9" className="mr-[7px] h-[9px] w-4" fill="none" stroke="#c9c5b5" strokeWidth="1.500"><path d="M.7 8.300L8 1l7.300 7.300" /></svg>
      <div className="h-full w-px bg-[#57523f]" />
    </div>
  </div>
);

/* ---------- video overlays ---------- */

const Danmaku = ({ children, className }: Kids) => (
  <div
    className={cx(
      "absolute whitespace-nowrap text-[67.500px] font-bold leading-[90px] text-[#ebe1cd] opacity-[0.83] [-webkit-text-stroke:4px_#2a2616] [paint-order:stroke_fill]",
      className,
    )}
  >
    {children}
  </div>
);

const Watermark = () => (
  <div className="absolute left-[273px] top-[34px] flex items-start opacity-65">
    <span className="pt-[19px] text-[36px] font-black leading-[42px] tracking-[2px] text-[#f5efe4]">黑马程序员</span>
    <svg viewBox="0 0 142 62" className="ml-[8px] h-[62px] w-[144px]" fill="#f5efe4">
      {[0, 70].map((x, k) => (
        <g key={x} transform={`translate(${x} 0)`}>
          <path
            fillRule="evenodd"
            d={
              k
                ? "M1 5l11-3 2 36c12 0 21 4 23 9-2 6-14 12-27 14zM14 45l1 9c5-1 9-3 12-6-4-2-8-3-13-3z"
                : "M1 7l11-4 2 35c12 0 21 4 23 9-2 6-14 12-27 14zM14 45l1 9c5-1 9-3 12-6-4-2-8-3-13-3z"
            }
          />
          <path d="M38 23l6-1 1 10-5 1zM40 36l6-1 3 22-6 1zM48 10l8-1 5 47-7 1zM58 22l6-1 1 10-5 1zM61 35l6-1 2 22-6 1z" />
        </g>
      ))}
    </svg>
  </div>
);

const Viewers = () => (
  <div className="absolute left-[218px] top-[1024px] flex items-center text-[#b5b0a2] opacity-50">
    <svg viewBox="0 0 36 30" className="h-[30px] w-9" fill="none" stroke="currentColor" strokeWidth="2.200">
      <path d="M2 28q1-5 6-7a10.500 10.500 0 1 1 9 0q5 2 6 7M25 5q8 3 7 10-1 5-4 7 4 2 5 6" />
    </svg>
    <span className="pl-[16px] text-[30px] leading-[44px]">1人正在看</span>
  </div>
);

export default function App() {
  return (
    <div className="relative flex h-[1080px] w-[2400px] justify-center overflow-hidden bg-[#1b170a] font-['Open_Sans','Noto_Sans_CJK_SC',sans-serif]">
      <div className="flex h-[1080px] w-[1920px] flex-col">
        <div className="h-[81px] shrink-0 bg-[#306e40]">
          <TitleBar />
          <Tabs />
        </div>
        <Ribbon />
        <FormulaBar />
        <div className="flex h-[718px] shrink-0">
          <Sheet />
          <VerticalScroll />
        </div>
        <SheetTabs />
        <StatusBar />
        <Taskbar />
      </div>

      <div className="absolute left-[1427px] top-[681px] h-[26px] w-px bg-[#2b2718]" />
      <Watermark />
      <Viewers />
      <Danmaku className="-left-[27px] top-0">金打卡</Danmaku>
      <Danmaku className="left-[1157px] top-0 font-['Noto_Sans_CJK_SC'] tracking-[-1.500px]">????</Danmaku>
      <Danmaku className="left-[1679px] top-0">坚持弟弟</Danmaku>
      <Danmaku className="left-[2100px] top-0">林青霞打卡</Danmaku>
      <Danmaku className="left-[2133px] top-[90px]">通俗易懂</Danmaku>
      <Danmaku className="left-[2217px] top-[179px]">数值，</Danmaku>
    </div>
  );
}
